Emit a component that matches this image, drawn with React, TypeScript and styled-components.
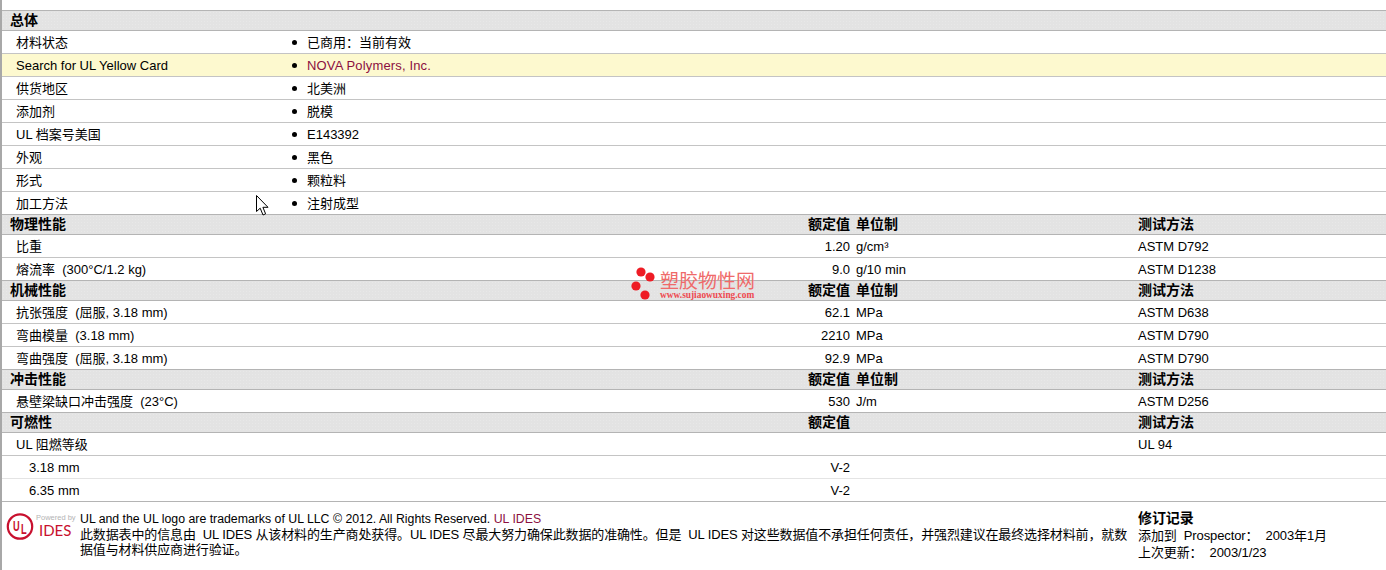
import React from "react";
import styled, { createGlobalStyle } from "styled-components";

const GlobalStyle = createGlobalStyle`
  html, body {
    margin: 0;
    padding: 0;
    height: 570px;
    overflow: hidden;
    background: #fff;
  }

  body {
    font-family: "Liberation Sans", "Noto Sans CJK SC", sans-serif;
    font-size: 13px;
    color: #000;
  }
`;

interface Rated {
  label: string;
  value?: string;
  unit?: string;
  method?: string;
  nested?: boolean;
}

interface Section {
  title: string;
  showUnit: boolean;
  rows: Rated[];
}

const general = [
  { label: "材料状态", value: "已商用：当前有效" },
  { label: "Search for UL Yellow Card", value: "NOVA Polymers, Inc.", highlight: true },
  { label: "供货地区", value: "北美洲" },
  { label: "添加剂", value: "脱模" },
  { label: "UL 档案号美国", value: "E143392" },
  { label: "外观", value: "黑色" },
  { label: "形式", value: "颗粒料" },
  { label: "加工方法", value: "注射成型" },
];

const sections: Section[] = [
  {
    title: "物理性能",
    showUnit: true,
    rows: [
      { label: "比重", value: "1.20", unit: "g/cm³", method: "ASTM D792" },
      { label: "熔流率  (300°C/1.2 kg)", value: "9.0", unit: "g/10 min", method: "ASTM D1238" },
    ],
  },
  {
    title: "机械性能",
    showUnit: true,
    rows: [
      { label: "抗张强度  (屈服, 3.18 mm)", value: "62.1", unit: "MPa", method: "ASTM D638" },
      { label: "弯曲模量  (3.18 mm)", value: "2210", unit: "MPa", method: "ASTM D790" },
      { label: "弯曲强度  (屈服, 3.18 mm)", value: "92.9", unit: "MPa", method: "ASTM D790" },
    ],
  },
  {
    title: "冲击性能",
    showUnit: true,
    rows: [{ label: "悬壁梁缺口冲击强度  (23°C)", value: "530", unit: "J/m", method: "ASTM D256" }],
  },
  {
    title: "可燃性",
    showUnit: false,
    rows: [
      { label: "UL 阻燃等级", method: "UL 94" },
      { label: "3.18 mm", value: "V-2", nested: true },
      { label: "6.35 mm", value: "V-2", nested: true },
    ],
  },
];

const App: React.FC = () => {
  return (
    <>
      <GlobalStyle />
      <Page>
        <HeadRow>
          <HeadTitle>总体</HeadTitle>
        </HeadRow>
        {general.map((row) => (
          <GeneralRow key={row.label} $highlight={row.highlight}>
            <Label>{row.label}</Label>
            <Bullet />
            <GeneralValue $highlight={row.highlight}>{row.value}</GeneralValue>
          </GeneralRow>
        ))}
        {sections.map((section) => (
          <React.Fragment key={section.title}>
            <HeadRow>
              <HeadTitle>{section.title}</HeadTitle>
              <HeadValue>额定值</HeadValue>
              <HeadTitle>{section.showUnit ? "单位制" : ""}</HeadTitle>
              <HeadTitle>测试方法</HeadTitle>
            </HeadRow>
            {section.rows.map((row) => (
              <DataRow key={row.label} $nested={row.nested}>
                <Label $nested={row.nested}>{row.label}</Label>
                <Value>{row.value}</Value>
                <span>{row.unit}</span>
                <span>{row.method}</span>
              </DataRow>
            ))}
          </React.Fragment>
        ))}
        <Footer>
          <LogoBlock>
            <ULMark width="28" height="29" viewBox="0 0 28 29">
              <circle cx="14" cy="14.5" r="12.2" fill="none" stroke="#c8102e" strokeWidth="2.2" />
              <text
                transform="translate(7 19) scale(0.62 1)"
                fontSize="15"
                fontFamily="Liberation Sans"
                fontWeight="700"
                fill="#c8102e"
              >
                U<tspan dx="2" dy="3">L</tspan>
              </text>
            </ULMark>
            <LogoText>
              <Powered>Powered by</Powered>
              <Ides>IDES</Ides>
            </LogoText>
          </LogoBlock>
          <Legal>
            <Trademark>
              UL and the UL logo are trademarks of UL LLC © 2012. All Rights Reserved. <Crimson>UL IDES</Crimson>
            </Trademark>
            <Disclaimer>
              此数据表中的信息由 &nbsp;UL IDES 从该材料的生产商处获得。UL IDES 尽最大努力确保此数据的准确性。但是 &nbsp;UL IDES 对这些数据值不承担任何责任，并强烈建议在最终选择材料前，就数据值与材料供应商进行验证。
            </Disclaimer>
          </Legal>
          <Revision>
            <RevisionTitle>修订记录</RevisionTitle>
            <div>添加到 &nbsp;Prospector： &nbsp;2003年1月</div>
            <div>上次更新： &nbsp;2003/1/23</div>
          </Revision>
        </Footer>
        <Watermark>
          <Dots width="26" height="34" viewBox="0 0 26 34">
            <circle cx="10" cy="5" r="4.6" fill="#ee1c25" />
            <circle cx="19" cy="10" r="4.6" fill="#ee1c25" />
            <circle cx="5" cy="19" r="4.6" fill="#ee1c25" />
            <circle cx="14" cy="28" r="4.6" fill="#ee1c25" />
          </Dots>
          <WatermarkText>
            <WatermarkName>塑胶物性网</WatermarkName>
            <WatermarkUrl>www.sujiaowuxing.com</WatermarkUrl>
          </WatermarkText>
        </Watermark>
        <Cursor width="14" height="22" viewBox="0 0 14 22">
          <path
            d="M0.5 0.5V16.5L4.2 13.2L7 20L9.6 18.8L6.9 12.3H12Z"
            fill="#fff"
            stroke="#000"
            strokeWidth="1"
          />
        </Cursor>
      </Page>
    </>
  );
};

export default App;

const columns = "694px 140px 276px 1fr";

const Page = styled.div`
  position: relative;
  width: 1386px;
  height: 570px;
  box-sizing: border-box;
  padding-top: 11px;
  border-left: 2px solid #a8a8a8;
  overflow: hidden;
`;

const HeadRow = styled.div`
  display: grid;
  grid-template-columns: ${columns};
  column-gap: 6px;
  box-sizing: border-box;
  height: 21px;
  margin-top: -1px;
  padding-left: 8px;
  line-height: 18px;
  border-top: 1px solid #b4b4b4;
  border-bottom: 1px solid #b4b4b4;
  background-color: #e3e3e3;
  background-image: radial-gradient(#e8e8e8 0.5px, transparent 0.6px);
  background-size: 3px 3px;
`;

const HeadTitle = styled.span`
  font-size: 14px;
  font-weight: 700;
  color: #000;
`;

const HeadValue = styled(HeadTitle)`
  text-align: right;
`;

const BaseRow = styled.div`
  display: grid;
  box-sizing: border-box;
  height: 23px;
  padding-left: 8px;
  line-height: 23px;
  border-bottom: 1px solid #c4c4c4;
`;

const GeneralRow = styled(BaseRow)<{ $highlight?: boolean }>`
  grid-template-columns: 282px 12px 1fr;
  background: ${(p) => (p.$highlight ? "#fdf9cf" : "#fff")};
`;

const DataRow = styled(BaseRow)<{ $nested?: boolean }>`
  grid-template-columns: ${columns};
  column-gap: 6px;
  border-bottom-color: ${(p) => (p.$nested ? "#e4e4e4" : "#c4c4c4")};
`;

const Label = styled.span<{ $nested?: boolean }>`
  padding-left: ${(p) => (p.$nested ? "19px" : "6px")};
  white-space: pre;
`;

const Bullet = styled.span`
  align-self: center;
  justify-self: start;
  width: 5px;
  height: 5px;
  border-radius: 50%;
  background: #000;
`;

const GeneralValue = styled.span<{ $highlight?: boolean }>`
  padding-left: 3px;
  letter-spacing: ${(p) => (p.$highlight ? "0.15px" : "0")};
  color: ${(p) => (p.$highlight ? "#8c0f3f" : "#000")};
`;

const Value = styled.span`
  text-align: right;
`;

const Footer = styled.div`
  display: flex;
  box-sizing: border-box;
  height: 70px;
  margin-top: -1px;
  padding-top: 10px;
  border-top: 1px solid #b4b4b4;
  line-height: 15px;
`;

const LogoBlock = styled.div`
  position: relative;
  flex: none;
  width: 78px;
  height: 30px;
`;

const ULMark = styled.svg`
  position: absolute;
  left: 4px;
  top: 0;
  display: block;
`;

const LogoText = styled.div`
  position: absolute;
  left: 34px;
  top: 2px;
  display: flex;
  flex-direction: column;
`;

const Powered = styled.span`
  font-size: 7.5px;
  line-height: 8px;
  color: #b4b4b4;
  white-space: nowrap;
`;

const Ides = styled.span`
  padding-left: 3px;
  font-family: "Lato", sans-serif;
  font-size: 15px;
  line-height: 16px;
  color: #c8102e;
`;

const Legal = styled.div`
  flex: none;
  width: 1052px;
`;

const Trademark = styled.div`
  font-size: 12.3px;
`;

const Disclaimer = styled.div`
  letter-spacing: -0.13px;
`;

const Crimson = styled.span`
  color: #8c0f3f;
`;

const Revision = styled.div`
  margin-top: -2px;
  margin-left: 6px;
  line-height: 17px;
  letter-spacing: -0.1px;
  white-space: nowrap;
`;

const RevisionTitle = styled.div`
  font-size: 14px;
  font-weight: 700;
`;

const Watermark = styled.div`
  position: absolute;
  left: 629px;
  top: 267px;
  display: flex;
  gap: 3px;
  pointer-events: none;
`;

const Dots = styled.svg`
  display: block;
`;

const WatermarkText = styled.div`
  display: flex;
  flex-direction: column;
  padding-top: 2px;
`;

const WatermarkName = styled.span`
  font-size: 19px;
  line-height: 26px;
  color: #ef6a6a;
`;

const WatermarkUrl = styled.span`
  margin-top: -4px;
  font-family: "Liberation Serif", serif;
  font-size: 9.4px;
  line-height: 9px;
  font-weight: 700;
  color: #ee4a50;
`;

const Cursor = styled.svg`
  position: absolute;
  left: 254px;
  top: 195px;
`;
